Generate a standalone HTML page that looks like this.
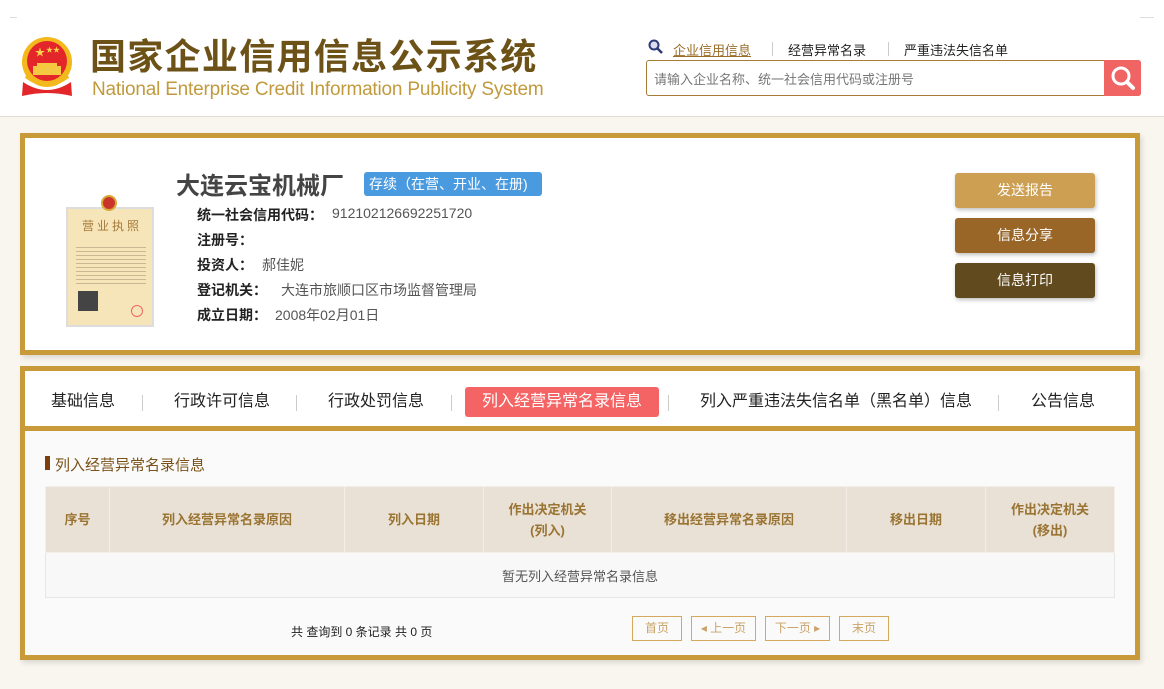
<!DOCTYPE html>
<html><head><meta charset="utf-8"><style>
*{margin:0;padding:0;box-sizing:border-box}
body{width:1164px;height:689px;background:#f9f6ef;font-family:"Liberation Sans","Noto Sans CJK SC",sans-serif;position:relative;overflow:hidden}
.hdr{position:absolute;left:0;top:0;width:1164px;height:117px;background:#fff;border-bottom:1px solid #e2dcd0}
.abs{position:absolute}
.card{position:absolute;border:5px solid #c99a3a;background:#fff;box-shadow:2px 3px 5px rgba(0,0,0,.12)}
.btn{position:absolute;left:955px;width:140px;height:35px;border-radius:3px;color:#fff;font-size:14px;text-align:center;line-height:35px;box-shadow:1px 2px 4px rgba(0,0,0,.25)}
.lbl{position:absolute;left:197px;font-size:14px;font-weight:bold;color:#222}
.val{position:absolute;font-size:14px;color:#555}
.tab{position:absolute;top:388px;font-size:16px;color:#222;line-height:28px}
.sep{position:absolute;top:395px;width:1px;height:16px;background:#ccc}
table{position:absolute;left:45px;top:486px;width:1070px;border-collapse:collapse}
th{background:#e9e1d5;color:#9a7432;font-size:13px;font-weight:bold;height:66px;border:1px solid #f3efe8;line-height:21px}
td{height:45px;border:1px solid #e6e6e6;text-align:center;font-size:13px;color:#555;background:#f8f8f8}
.pg{position:absolute;top:616px;height:25px;border:1px solid #d4a95e;color:#c9a368;font-size:12px;text-align:center;line-height:23px}
</style></head><body>
<div class="hdr"></div>
<div class="abs" style="left:10px;top:17px;width:7px;height:1px;background:#ddd"></div>
<div class="abs" style="left:1140px;top:17px;width:14px;height:1px;background:#ddd"></div>
<svg class="abs" style="left:20px;top:36px" width="54" height="64" viewBox="0 0 54 64">
<circle cx="27" cy="26" r="25" fill="#f2b81c"/>
<circle cx="27" cy="25" r="20" fill="#e3262a"/>
<text x="15" y="20" font-size="10" fill="#f9d34a">★</text>
<text x="26" y="16" font-size="7" fill="#f9d34a">★★</text>
<rect x="13" y="30" width="28" height="9" fill="#f5c842"/>
<rect x="17" y="27" width="20" height="4" fill="#f5c842"/>
<path d="M3 46 Q27 62 51 46 L52 60 Q27 54 2 60Z" fill="#e3262a"/>
<path d="M6 40 Q27 56 48 40" stroke="#f2b81c" stroke-width="4" fill="none"/>
</svg>
<div class="abs" style="left:90px;top:35px;font-size:36px;font-weight:bold;color:#6d5218;line-height:44px;letter-spacing:1.3px">国家企业信用信息公示系统</div>
<div class="abs" style="left:92px;top:79px;font-size:19px;color:#c19a3d;line-height:22px;letter-spacing:-0.2px">National Enterprise Credit Information Publicity System</div>
<svg class="abs" style="left:648px;top:39px" width="16" height="16" viewBox="0 0 16 16"><circle cx="6" cy="6" r="4.5" stroke="#2d3a78" stroke-width="2" fill="#dde"/><path d="M9.5 9.5L14 14" stroke="#2d3a78" stroke-width="2.5"/></svg>
<div class="abs" style="left:673px;top:40px;font-size:13px;color:#9a6d2a;text-decoration:underline">企业信用信息</div>
<div class="abs" style="left:772px;top:42px;width:1px;height:14px;background:#ccc"></div>
<div class="abs" style="left:788px;top:40px;font-size:13px;color:#222">经营异常名录</div>
<div class="abs" style="left:888px;top:42px;width:1px;height:14px;background:#ccc"></div>
<div class="abs" style="left:904px;top:40px;font-size:13px;color:#222">严重违法失信名单</div>
<div class="abs" style="left:646px;top:60px;width:495px;height:36px;border:1px solid #a67c38;border-radius:3px;background:#fff"></div>
<div class="abs" style="left:654px;top:69px;font-size:13px;color:#777">请输入企业名称、统一社会信用代码或注册号</div>
<div class="abs" style="left:1104px;top:60px;width:37px;height:36px;background:#f06464;border-radius:0 3px 3px 0"></div>
<svg class="abs" style="left:1108px;top:63px" width="30" height="30" viewBox="0 0 30 30"><circle cx="13" cy="13" r="8" stroke="#fff" stroke-width="3" fill="none"/><path d="M19 19L25 25" stroke="#fff" stroke-width="4" stroke-linecap="round"/></svg>

<div class="card" style="left:20px;top:133px;width:1120px;height:222px"></div>
<div class="abs" style="left:66px;top:207px;width:88px;height:120px;background:#f6e5b9;border:2px solid #ddd"></div>
<div class="abs" style="left:101px;top:195px;width:16px;height:16px;border-radius:50%;background:#c9352c;border:2px solid #d9a935"></div>
<div class="abs" style="left:82px;top:217px;font-size:12px;color:#a5793a;letter-spacing:3px">营业执照</div>
<div class="abs" style="left:76px;top:244px;width:70px;height:40px;background:repeating-linear-gradient(#f6e5b9 0 3px,#c9b893 3px 4px)"></div>
<div class="abs" style="left:78px;top:291px;width:20px;height:20px;background:#444"></div>
<div class="abs" style="left:131px;top:305px;width:12px;height:12px;border-radius:50%;border:1px solid #e66"></div>
<div class="abs" style="left:176px;top:166px;font-size:24px;font-weight:bold;color:#444">大连云宝机械厂</div>
<div class="abs" style="left:364px;top:172px;width:178px;height:24px;background:#4a9ae0;border-radius:3px;color:#fff;font-size:14px;line-height:24px;padding-left:5px">存续（在营、开业、在册)</div>
<div class="lbl" style="top:205px">统一社会信用代码：</div><div class="val" style="left:332px;top:205px">912102126692251720</div>
<div class="lbl" style="top:230px">注册号：</div>
<div class="lbl" style="top:255px">投资人：</div><div class="val" style="left:262px;top:255px">郝佳妮</div>
<div class="lbl" style="top:280px">登记机关：</div><div class="val" style="left:281px;top:280px">大连市旅顺口区市场监督管理局</div>
<div class="lbl" style="top:305px">成立日期：</div><div class="val" style="left:275px;top:305px">2008年02月01日</div>
<div class="btn" style="top:173px;background:#cc9f52">发送报告</div>
<div class="btn" style="top:218px;background:#996628">信息分享</div>
<div class="btn" style="top:263px;background:#624a1f">信息打印</div>

<div class="card" style="left:20px;top:366px;width:1120px;height:294px;background:#fafafa"></div>
<div class="abs" style="left:25px;top:371px;width:1110px;background:#fff;border-bottom:5px solid #c99a3a;height:60px"></div>
<div class="tab" style="left:51px">基础信息</div><div class="sep" style="left:142px"></div>
<div class="tab" style="left:174px">行政许可信息</div><div class="sep" style="left:296px"></div>
<div class="tab" style="left:328px">行政处罚信息</div><div class="sep" style="left:451px"></div>
<div class="tab" style="left:465px;width:194px;height:30px;background:#f46464;color:#fff;border-radius:3px;text-align:center;line-height:30px;top:387px">列入经营异常名录信息</div>
<div class="sep" style="left:668px"></div>
<div class="tab" style="left:700px">列入严重违法失信名单（黑名单）信息</div><div class="sep" style="left:998px"></div>
<div class="tab" style="left:1031px">公告信息</div>
<div class="abs" style="left:45px;top:456px;width:5px;height:14px;background:#7a3f0c"></div>
<div class="abs" style="left:55px;top:454px;font-size:15px;color:#7a5218">列入经营异常名录信息</div>
<table>
<tr><th style="width:64px">序号</th><th style="width:235px">列入经营异常名录原因</th><th style="width:139px">列入日期</th><th style="width:128px">作出决定机关<br>(列入)</th><th style="width:235px">移出经营异常名录原因</th><th style="width:139px">移出日期</th><th>作出决定机关<br>(移出)</th></tr>
<tr><td colspan="7">暂无列入经营异常名录信息</td></tr>
</table>
<div class="abs" style="left:291px;top:623px;font-size:12px;color:#222">共 查询到 0 条记录 共 0 页</div>
<div class="pg" style="left:632px;width:50px">首页</div>
<div class="pg" style="left:691px;width:65px">◂ 上一页</div>
<div class="pg" style="left:765px;width:65px">下一页 ▸</div>
<div class="pg" style="left:839px;width:50px">末页</div>
</body></html>
